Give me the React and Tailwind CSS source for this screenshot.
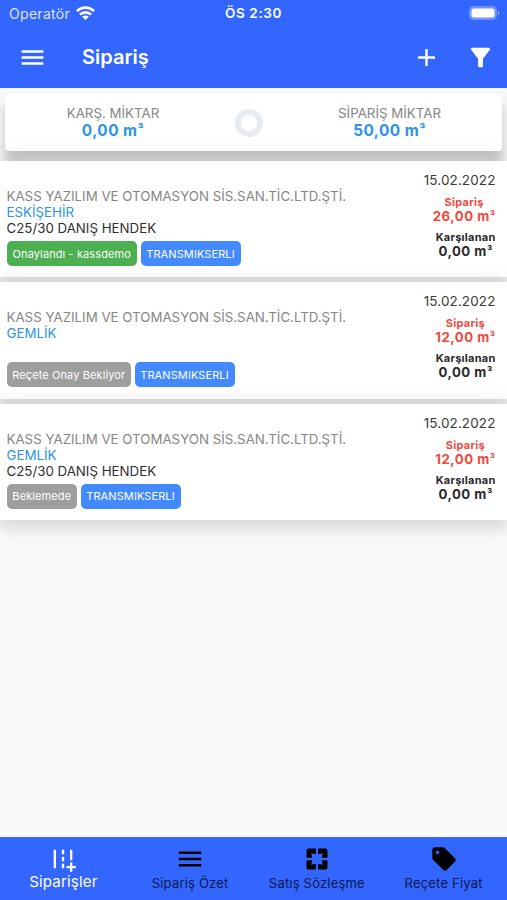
import React from "react";
import { MdAdd, MdAddRoad, MdFilterAlt, MdMenu, MdPages, MdSell } from "react-icons/md";

const orders = [
  {
    id: 1,
    date: "15.02.2022",
    company: "KASS YAZILIM VE OTOMASYON SİS.SAN.TİC.LTD.ŞTİ.",
    city: "ESKİŞEHİR",
    product: "C25/30 DANIŞ HENDEK",
    status: "Onaylandı - kassdemo",
    statusClass: "bg-[#4caf50] w-[130.5px]",
    ordered: "26,00 m³",
    delivered: "0,00 m³",
  },
  {
    id: 2,
    date: "15.02.2022",
    company: "KASS YAZILIM VE OTOMASYON SİS.SAN.TİC.LTD.ŞTİ.",
    city: "GEMLİK",
    product: "",
    status: "Reçete Onay Bekliyor",
    statusClass: "bg-[#9e9e9e] w-[124.5px]",
    ordered: "12,00 m³",
    delivered: "0,00 m³",
  },
  {
    id: 3,
    date: "15.02.2022",
    company: "KASS YAZILIM VE OTOMASYON SİS.SAN.TİC.LTD.ŞTİ.",
    city: "GEMLİK",
    product: "C25/30 DANIŞ HENDEK",
    status: "Beklemede",
    statusClass: "bg-[#9e9e9e] w-[70.5px]",
    ordered: "12,00 m³",
    delivered: "0,00 m³",
  },
];

const tabs = [
  { label: "Siparişler", Icon: MdAddRoad, size: 28, active: true },
  { label: "Sipariş Özet", Icon: MdMenu, size: 30 },
  { label: "Satış Sözleşme", Icon: MdPages, size: 28 },
  { label: "Reçete Fiyat", Icon: MdSell, size: 28 },
];

function StatusBar() {
  return (
    <div className="grid h-[27px] grid-cols-3 items-center px-[9px] text-white">
      <div className="flex items-center gap-[6px]">
        <span className="text-[14px] tracking-[0.3px] text-[#dce4ff]">Operatör</span>
        <svg className="-mt-[2px]" width="19" height="14" viewBox="0 0 19 14" fill="none" stroke="#fff" strokeWidth="2.6">
          <path d="M1 5.2a12 12 0 0 1 17 0" />
          <path d="M4 8.6a7.8 7.8 0 0 1 11 0" />
          <path d="M9.5 14 6.2 10.8a4.6 4.6 0 0 1 6.6 0z" fill="#fff" stroke="none" />
        </svg>
      </div>
      <div className="text-center text-[13.5px] font-semibold tracking-[0.6px]">ÖS 2:30</div>
      <svg className="-mr-[2px] -mt-px justify-self-end" width="31" height="14" viewBox="0 0 31 14">
        <rect x="0" y="0" width="28" height="14" rx="4.5" fill="#7092ff" />
        <rect x="2.5" y="2.5" width="23" height="9" rx="2.2" fill="#fff" />
        <path d="M29 5v4a2.2 2.2 0 0 0 0-4z" fill="#9db3ff" />
      </svg>
    </div>
  );
}

// quantity such as "26,00 m³", with a slightly smaller exponent
function Amount({ value }) {
  return (
    <>
      {value.slice(0, -1)}
      <span className="align-[0.12em] text-[0.85em] leading-none">{value.slice(-1)}</span>
    </>
  );
}

function OrderCard({ order }) {
  return (
    <div className="flex h-[116.4px] justify-between bg-white pl-[6.5px] pr-[11.5px] shadow-[0_8px_10px_2px_rgba(0,0,0,0.05),0_4px_22px_4px_rgba(0,0,0,0.09)]">
      <div className="flex flex-col whitespace-nowrap pt-[27px] text-[13.3px] leading-[16px]">
        <div className="text-[#868686]">{order.company}</div>
        <div className="text-[#2b93ea]">{order.city}</div>
        <div className="h-4 text-[#303030]">{order.product}</div>
        <div className="mt-[5px] flex gap-[3.5px] text-[11px] tracking-[0.1px] text-white">
          <span className={`flex h-[25px] items-center justify-center rounded-[5px] ${order.statusClass}`}>{order.status}</span>
          <span className="flex h-[25px] w-[100px] items-center justify-center rounded-[5px] bg-[#448aff]">TRANSMIKSERLI</span>
        </div>
      </div>
      <div className="flex flex-col items-end whitespace-nowrap pt-[11px]">
        <div className="text-[13.5px] leading-[17px] tracking-[0.1px] text-[#3a3a3a]">{order.date}</div>
        <div className="mt-[6px] text-center font-bold text-[#ee4a3e]">
          <div className="text-[11px] leading-[14px] tracking-[0.25px]">Sipariş</div>
          <div className="h-[14px] text-[13.2px] leading-[14px] tracking-[0.5px]"><Amount value={order.ordered} /></div>
        </div>
        <div className="mt-[7px] text-center font-bold text-[#2a2a2a]">
          <div className="text-[11px] leading-[14px] tracking-[0.25px]">Karşılanan</div>
          <div className="h-[14px] text-[13.2px] leading-[14px] tracking-[0.5px]"><Amount value={order.delivered} /></div>
        </div>
      </div>
    </div>
  );
}

export default function App() {
  return (
    <div className="flex h-[900px] w-[507px] flex-col overflow-hidden bg-[#fafafa] font-['Inter','Noto_Sans',sans-serif]">
      <header className="h-[88px] shrink-0 bg-[#3366ff] text-white">
        <StatusBar />
        <div className="flex h-[60px] items-center pl-[18px] pr-[12.5px]">
          <MdMenu size={29} />
          <h1 className="ml-[35px] text-[20px] font-semibold">Sipariş</h1>
          <MdAdd className="ml-auto" size={29} />
          <MdFilterAlt className="ml-[25px]" size={29} />
        </div>
      </header>

      {/* Summary */}
      <div className="h-[73px] shrink-0 overflow-hidden bg-[#f8f8f8] px-[5px] pt-[6px]">
        <div className="flex h-[57px] items-center rounded-[4px] bg-white shadow-[0_12px_8px_rgba(0,0,0,0.12),0_10px_14px_1px_rgba(0,0,0,0.1)]">
          <div className="w-[216px] text-center">
            <div className="text-[13.3px] leading-[17px] text-[#868686]">KARŞ. MİKTAR</div>
            <div className="h-[18px] text-[15.3px] font-bold leading-[18px] tracking-[0.5px] text-[#2b93ea]"><Amount value="0,00 m³" /></div>
          </div>
          <div className="mx-[14px] h-[28px] w-[28px] rounded-full border-[6.5px] border-[#e9ecef]" />
          <div className="w-[225px] text-center">
            <div className="text-[13.3px] leading-[17px] text-[#868686]">SİPARİŞ MİKTAR</div>
            <div className="h-[18px] text-[15.3px] font-bold leading-[18px] tracking-[0.5px] text-[#2b93ea]"><Amount value="50,00 m³" /></div>
          </div>
        </div>
      </div>

      <main className="flex flex-1 flex-col gap-[4.9px]">
        {orders.map((order) => (
          <OrderCard key={order.id} order={order} />
        ))}
      </main>

      <nav className="grid h-[63px] shrink-0 grid-cols-4 bg-[#3366ff]">
        {tabs.map(({ label, Icon, size, active }) => (
          <div key={label} className={`flex flex-col items-center pt-[8px] ${active ? "text-white" : "text-black"}`}>
            <div className="flex h-[27px] items-center">
              <Icon size={size} />
            </div>
            <span className={active ? "text-[15px] leading-[19px] tracking-[0.2px]" : "text-[13px] leading-[22px] tracking-[0.2px] text-[#081a4d]"}>{label}</span>
          </div>
        ))}
      </nav>
    </div>
  );
}
